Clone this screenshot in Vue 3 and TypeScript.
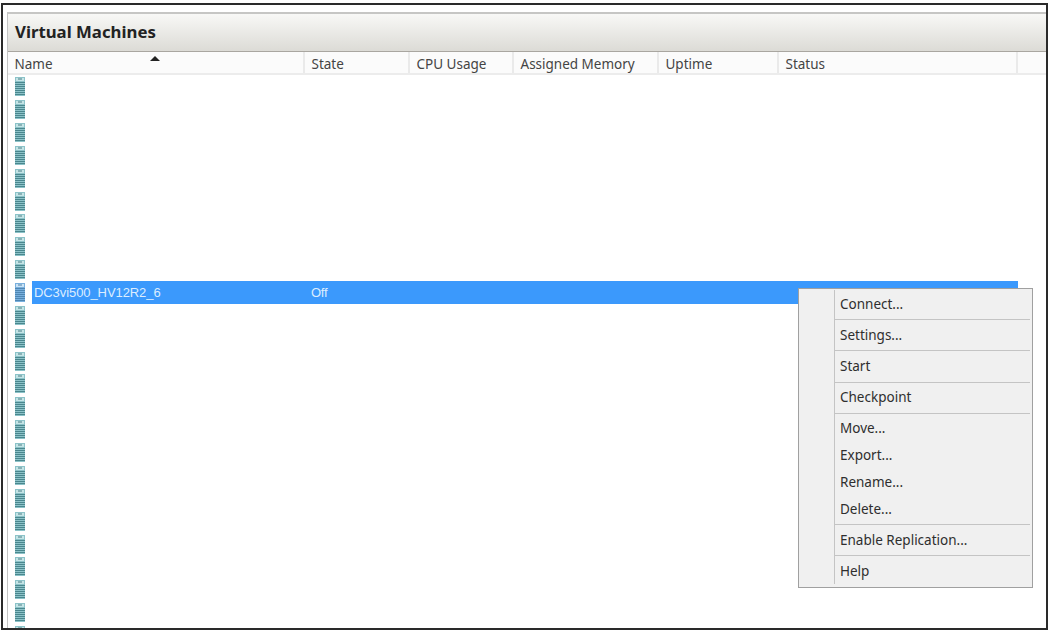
<script setup lang="ts">
interface Column { label: string; width: number }
const columns: Column[] = [
  { label: 'Name', width: 297 },
  { label: 'State', width: 105 },
  { label: 'CPU Usage', width: 104 },
  { label: 'Assigned Memory', width: 145 },
  { label: 'Uptime', width: 120 },
  { label: 'Status', width: 239 },
]
const rows = Array.from({ length: 25 }, (_, i) => i)
const selectedRow = 9
const bars = [5.5, 7.5, 9.5, 11.5, 13.5, 15.5, 17.5]
const menuGroups: string[][] = [
  ['Connect...'],
  ['Settings...'],
  ['Start'],
  ['Checkpoint'],
  ['Move...', 'Export...', 'Rename...', 'Delete...'],
  ['Enable Replication...'],
  ['Help'],
]
</script>

<template>
  <div class="page">
    <div class="frame">
      <section class="panel">
        <h1 class="title">Virtual Machines</h1>
        <div class="header">
          <div v-for="(c, i) in columns" :key="c.label" class="head-cell" :style="{ width: c.width + 'px' }">
            {{ c.label }}
            <span v-if="i === 0" class="sort"></span>
          </div>
        </div>
        <div class="rows">
          <div v-for="r in rows" :key="r" class="row">
            <svg class="vm-icon" :class="{ current: r === selectedRow }" width="10" height="19" viewBox="0 0 10 19">
              <rect class="body" x="0" y="0" width="10" height="19" />
              <rect class="cap" x="1" y="1" width="8" height="3" />
              <rect class="slot" x="3" y="1.5" width="4" height="1" />
              <line v-for="b in bars" :key="b" class="bar" x1="0" x2="10" :y1="b" :y2="b" />
            </svg>
            <div v-if="r === selectedRow" class="selection">
              <span class="sel-name">DC3vi500_HV12R2_6</span>
              <span class="sel-state">Off</span>
            </div>
          </div>
        </div>
        <div class="menu">
          <div v-for="(group, g) in menuGroups" :key="g" class="menu-group">
            <div v-for="item in group" :key="item" class="menu-item">{{ item }}</div>
          </div>
        </div>
      </section>
    </div>
  </div>
</template>

<style>
html, body { margin: 0; background: #fff; }
</style>

<style scoped>
.page {
  width: 1051px;
  height: 633px;
  box-sizing: border-box;
  padding: 3px 3px 3px 1px;
  overflow: hidden;
  background: #fff;
}
.frame {
  height: 100%;
  box-sizing: border-box;
  border: 2px solid #2a2a2a;
  padding: 7px 0 0 4px;
  background: #fff;
  overflow: hidden;
}
.panel {
  position: relative;
  height: 100%;
  border-left: 1px solid #c4c4c4;
  font-family: "Noto Sans", sans-serif;
  color: #333;
}
.title {
  margin: 0;
  height: 40px;
  box-sizing: border-box;
  padding: 7px 0 0 7px;
  border-top: 2px solid #c6c6c4;
  border-bottom: 1px solid #a9a6a0;
  background: linear-gradient(#f8f8f6, #dcdbd6);
  font-size: 16.8px;
  line-height: 22px;
  font-weight: 700;
  color: #222;
}
.header {
  display: flex;
  height: 23px;
  box-sizing: border-box;
  border-bottom: 2px solid #ececec;
  background: #fbfbfb;
}
.head-cell {
  position: relative;
  box-sizing: border-box;
  flex: none;
  padding: 3px 0 0 6.5px;
  border-right: 2px solid #eaeaea;
  font-size: 13.5px;
  line-height: 18px;
  color: #444;
}
.sort {
  position: absolute;
  left: 142px;
  top: 4px;
  width: 0;
  height: 0;
  border-left: 5px solid transparent;
  border-right: 5px solid transparent;
  border-bottom: 5px solid #222;
}
.rows {
  display: grid;
  grid-auto-rows: 22.86px;
  padding-top: 0.4px;
}
.row {
  display: flex;
  align-items: center;
  padding-left: 7px;
  min-width: 0;
}
.vm-icon { flex: none; }
.body { fill: #8cc3c9; }
.cap { fill: #c4e4e6; }
.slot { fill: #4b7f86; }
.bar { stroke: #4a878e; stroke-width: 1; }
.current .body { fill: #79b0de; }
.current .cap { fill: #c9e2f5; }
.current .slot { fill: #4c7fa8; }
.current .bar { stroke: #4f86b2; }
.selection {
  display: flex;
  align-items: center;
  margin-left: 7px;
  width: 986px;
  height: 23px;
  background: #3b99fc;
  color: #dcedff;
  font-family: "Liberation Sans", sans-serif;
  font-size: 13px;
}
.sel-name { width: 277px; padding-left: 2px; letter-spacing: -0.08px; }
.sel-state { letter-spacing: -0.3px; }
.menu {
  position: absolute;
  left: 790px;
  top: 276px;
  width: 235px;
  height: 300px;
  box-sizing: border-box;
  padding: 0 2px 0 35px;
  background: #f0f0f0;
  border: 1px solid #a0a0a0;
  font-size: 13.5px;
  color: #2e2e2e;
}
.menu::before {
  content: "";
  position: absolute;
  left: 35px;
  top: 1px;
  bottom: 3px;
  border-left: 1px solid #c4c4c4;
}
.menu-group {
  padding: 1.7px 0 1.7px 6px;
  border-bottom: 1px solid #c4c4c4;
}
.menu-group:last-child { border-bottom: 0; }
.menu-item {
  height: 26.8px;
  line-height: 26px;
}
</style>
